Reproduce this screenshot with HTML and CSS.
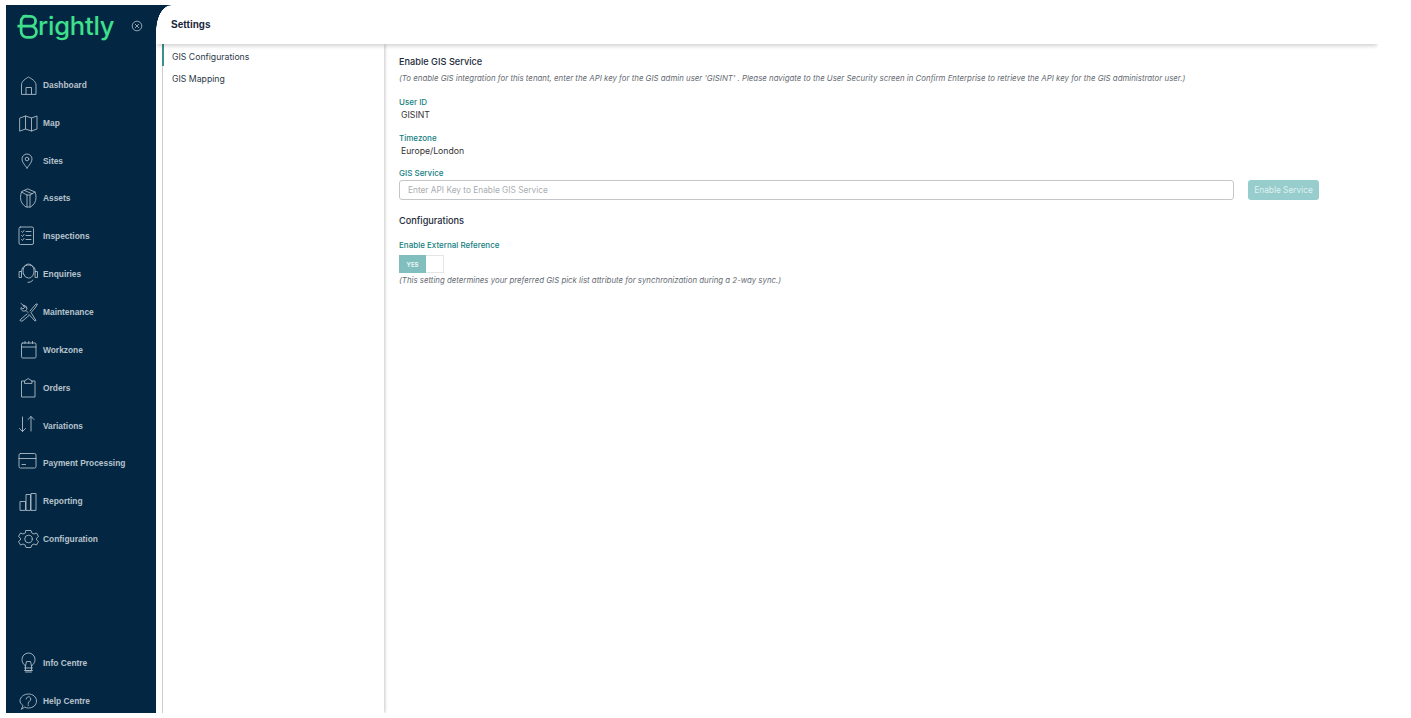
FILE: index.html
```html
<!DOCTYPE html>
<html lang="en">
<head>
<meta charset="utf-8">
<title>Settings</title>
<link rel="stylesheet" href="styles.css">
</head>
<body>
<div class="app">
  <aside class="sidebar">
    <div class="brand">
      <svg class="brand-mark" viewBox="0 0 24 30" width="22" height="28"><path d="M6 4.5 H15 a5 5 0 0 1 0 10.5 H6 M15 15 a6.2 6.2 0 0 1 0 12.5 H11 a6.5 6.5 0 0 1 -6.5 -6.5 V10 a6 6 0 0 1 6 -6 M0.5 15 H15"/></svg>
      <span class="brand-name">rightly</span>
      <svg class="brand-close" viewBox="0 0 12 12" width="12" height="12"><circle cx="6" cy="6" r="4.8"/><path d="M4 4 L8 8 M8 4 L4 8"/></svg>
    </div>
    <ul class="nav">
      <li class="nav-item"><svg class="ico" viewBox="0 0 24 24"><path d="M3.5 21 V12 C3.5 8 8 5.5 10.5 4 C13 5.5 18 8 18 12 V21 Z M8 21 V14.5 H13.5 V21"/></svg><span>Dashboard</span></li>
      <li class="nav-item"><svg class="ico" viewBox="0 0 24 24"><path d="M2 7 L7.5 5 L13.5 7 L19 5 V18 L13.5 20 L7.5 18 L2 20 Z M7.5 5 V18 M13.5 7 V20"/></svg><span>Map</span></li>
      <li class="nav-item"><svg class="ico" viewBox="0 0 24 24"><path d="M9 19 C6 15 4 13 4 10 a5 5 0 0 1 10 0 c0 3 -2 5 -5 9 Z"/><circle cx="9" cy="10" r="1.8"/></svg><span>Sites</span></li>
      <li class="nav-item"><svg class="ico" viewBox="0 0 24 24"><path d="M10 3 L17 6 Q18 8.5 18 11.5 Q18 17.5 12.5 21 H8 Q2.5 17.5 2.5 11.5 Q2.5 8.5 3.5 6 Z M3.5 6 L9 9 V21 M17 6 L12 9 V21 M6.5 4.5 L14 7.7 M9 9 H12"/></svg><span>Assets</span></li>
      <li class="nav-item"><svg class="ico" viewBox="0 0 24 24"><rect x="1" y="3" width="14.5" height="17.5" rx="1.5"/><path d="M3.5 7.5 L4.5 8.5 L6 6.5 M3.5 11.5 L4.5 12.5 L6 10.5 M3.5 15.5 L4.5 16.5 L6 14.5 M8 7.5 H13 M8 11.5 H13 M8 15.5 H13"/></svg><span>Inspections</span></li>
      <li class="nav-item"><svg class="ico" viewBox="0 0 24 24"><path d="M5.5 12 a5.5 7 0 1 1 10 0 a5.5 7 0 0 1 -10 0 Z M1.5 9.5 H3.5 V15.5 H1.5 Z M17.5 9.5 H19.5 V15.5 H17.5 Z M3.5 10 C3.5 5 7 3 10.5 3 C14 3 17.5 5 17.5 10 M15 18 Q13.5 20.5 10 20.5"/></svg><span>Enquiries</span></li>
      <li class="nav-item"><svg class="ico" viewBox="0 0 24 24"><path d="M9 8 L3 3.5 M12 11 L18 4 L19.5 4 L17.8 7 L13.5 12 M9 14 L3 19 Q1.5 20.5 2.5 21 Q4 21.5 5 20.5 L11 15.5 M13 12.5 L18 20.5 L17 21 L11 14.5 M8.5 10 C9.5 7.5 8 5 5 5.5 L6.5 7.5 L5 9 L3 7.5 C2.5 10.5 5.5 12 8 10.5 L10 12.5"/></svg><span>Maintenance</span></li>
      <li class="nav-item"><svg class="ico" viewBox="0 0 24 24"><rect x="3.5" y="5" width="14.5" height="15" rx="1.2"/><path d="M3.5 9 H18 M7 3.5 V5.5 M10.8 3.5 V5.5 M14.5 3.5 V5.5"/></svg><span>Workzone</span></li>
      <li class="nav-item"><svg class="ico" viewBox="0 0 24 24"><path d="M6.5 5 H3.5 V21 H17 V5 H14 M6.5 7 V5 L10.2 2.5 L14 5 V7 Z"/></svg><span>Orders</span></li>
      <li class="nav-item"><svg class="ico" viewBox="0 0 24 24"><path d="M4.5 3 V17.5 M1.5 14.5 L4.5 17.5 L7.5 14.5 M13 17 V2.5 M10 5.5 L13 2.5 L16 5.5"/></svg><span>Variations</span></li>
      <li class="nav-item"><svg class="ico" viewBox="0 0 24 24"><rect x="1" y="2.5" width="17" height="14.5" rx="1.5"/><path d="M1 7.5 H18 M4 13.5 H7.5"/></svg><span>Payment Processing</span></li>
      <li class="nav-item"><svg class="ico" viewBox="0 0 24 24"><path d="M2 21 V12.5 H7.5 V21 Z M8 21 V5.5 H12.5 V21 Z M13 21 V4.5 H18 V21 Z"/></svg><span>Reporting</span></li>
      <li class="nav-item"><svg class="ico" viewBox="0 0 24 24"><circle cx="10.5" cy="12" r="3.8"/><path d="M8 3.5 H13 L13.8 6 L16 7 L18.5 6 L20.5 9.5 L18.5 11.2 V12.8 L20.5 14.5 L18.5 18 L16 17 L13.8 18 L13 20.5 H8 L7.2 18 L5 17 L2.5 18 L0.5 14.5 L2.5 12.8 V11.2 L0.5 9.5 L2.5 6 L5 7 L7.2 6 Z"/></svg><span>Configuration</span></li>
    </ul>
    <ul class="nav nav-bottom">
      <li class="nav-item"><svg class="ico" viewBox="0 0 24 24"><path d="M7.5 15 C5 13 4 11 4 8.5 a6.5 6.5 0 0 1 13 0 C17 11 16 13 13.5 15 M7.5 15 V19.5 H13.5 V15 M7.5 15 L8.5 10.5 H12.5 L13.5 15 M6.5 17 H14.5 M6.5 19.5 H14.5 M7.5 21 H13.5"/></svg><span>Info Centre</span></li>
      <li class="nav-item"><svg class="ico" viewBox="0 0 24 24"><path d="M3.5 20 L5 16.5 C3 15 2 13.5 2 12 C2 8 6 5 10.5 5 C15 5 18.5 8 18.5 12 C18.5 16 15 19 10.5 19 Q8.5 19 7 18.3 Z M8.2 10 a2.3 2.3 0 1 1 3.5 2 Q10.2 13 10.2 14.5 M10.2 15.8 V16.6"/></svg><span>Help Centre</span></li>
    </ul>
  </aside>
  <div class="content">
    <header class="topbar"><h1 class="page-title">Settings</h1></header>
    <div class="panes">
      <nav class="subnav">
        <a class="subnav-item is-active">GIS Configurations</a>
        <a class="subnav-item">GIS Mapping</a>
      </nav>
      <main class="main">
        <h2 class="section-title">Enable GIS Service</h2>
        <p class="hint">(To enable GIS integration for this tenant, enter the API key for the GIS admin user 'GISINT' . Please navigate to the User Security screen in Confirm Enterprise to retrieve the API key for the GIS administrator user.)</p>
        <div class="field field-first">
          <div class="label">User ID</div>
          <div class="value">GISINT</div>
        </div>
        <div class="field">
          <div class="label">Timezone</div>
          <div class="value">Europe/London</div>
        </div>
        <div class="field field-service">
          <div class="label">GIS Service</div>
          <div class="service-row">
            <div class="input">Enter API Key to Enable GIS Service</div>
            <button class="btn" type="button">Enable Service</button>
          </div>
        </div>
        <h2 class="section-title section-config">Configurations</h2>
        <div class="label label-toggle">Enable External Reference</div>
        <div class="toggle"><span class="toggle-on">YES</span><span class="toggle-off"></span></div>
        <p class="hint hint-toggle">(This setting determines your preferred GIS pick list attribute for synchronization during a 2-way sync.)</p>
      </main>
    </div>
  </div>
</div>
</body>
</html>
```
FILE: styles.css
```css
* { box-sizing: border-box; }
html, body { margin: 0; padding: 0; height: 100%; background: #fff; overflow: hidden; }
body { font-family: "Inter", "Liberation Sans", sans-serif; }
.app { display: flex; height: 708px; margin: 5px 33px 0 6px; }

.sidebar { width: 150px; flex: none; background: #032743; display: flex; flex-direction: column; overflow: hidden; }
.brand { height: 61px; flex: none; display: flex; align-items: center; padding: 0 0 20px 11px; }
.brand-mark { flex: none; fill: none; stroke: #3ee08b; stroke-width: 3; }
.brand-name { font-family: "Inter", sans-serif; font-size: 25.5px; font-weight: 500; color: #3ee08b; margin-left: -1px; line-height: 1; letter-spacing: -0.2px; }
.brand-close { flex: none; margin-left: 17px; fill: none; stroke: #b6c2cc; stroke-width: 0.8; }

.nav { list-style: none; margin: 0; padding: 0; flex: none; }
.nav-bottom { margin-top: 86px; }
.nav-item { height: 37.85px; display: flex; align-items: center; padding-left: 12px; color: #b7c2cb; font-family: "Liberation Sans", sans-serif; font-size: 8.4px; font-weight: 700; }
.ico { width: 24px; height: 24px; flex: none; margin-right: 1px; fill: none; stroke: #aebbc6; stroke-width: 0.9; stroke-linejoin: round; stroke-linecap: round; }

.content { flex: 1; min-width: 0; display: flex; flex-direction: column; }
.topbar { position: relative; height: 39px; flex: none; display: flex; align-items: center; padding-left: 15px; background: #fff; box-shadow: 0 3px 4px -1px rgba(0,0,0,.18); clip-path: inset(0 0 -8px 0); z-index: 2; }
.topbar::before { content: ""; position: absolute; left: 0; top: 0; width: 15px; height: 26px; background: radial-gradient(ellipse 15px 26px at 100% 100%, #fff 97%, #032743 100%); }
.page-title { margin: 0; font-family: "Liberation Sans", sans-serif; font-size: 10px; font-weight: 700; color: #16233a; }

.panes { flex: 1; display: flex; min-height: 0; padding-left: 6px; }
.subnav { width: 222px; flex: none; border-left: 1px solid #c9cdd0; box-shadow: 1px 0 3px rgba(0,0,0,.22); clip-path: inset(0 -6px 0 0); display: flex; flex-direction: column; z-index: 1; }
.subnav-item { height: 22px; display: flex; align-items: center; padding: 4px 0 0 8px; font-size: 8.7px; color: #2c3a46; margin-left: -1px; border-left: 2px solid transparent; }
.subnav-item.is-active { border-left-color: #3a8f8f; }

.main { flex: 1; min-width: 0; padding: 11px 59px 0 15px; color: #2c3a46; }
.section-title { margin: 0; font-size: 9.2px; line-height: 13px; font-weight: 500; color: #1c2b3a; }
.hint { margin: 4px 0 0; font-size: 7.85px; line-height: 12px; font-style: italic; color: #666c73; white-space: nowrap; }
.label { font-size: 8px; line-height: 11px; font-weight: 500; color: #15807f; }
.value { font-size: 8.7px; line-height: 13px; padding: 1px 0 0 2px; color: #333; }
.field-first { margin-top: 13px; }
.field + .field { margin-top: 11px; }
.field + .field-service { margin-top: 10px; }
.service-row { display: flex; gap: 14px; margin-top: 1px; }
.input { flex: 1; height: 20px; border: 1px solid #c4c7ca; border-radius: 3px; padding-left: 8px; display: flex; align-items: center; font-size: 8.3px; color: #a9adb1; }
.btn { width: 71px; height: 20px; padding: 0; border: 0; border-radius: 3px; background: #97cdcd; color: #dff0f0; font-family: inherit; font-size: 8.3px; }
.section-config { margin-top: 14px; }
.label-toggle { margin-top: 13px; }
.toggle { display: flex; width: 45px; height: 18px; margin-top: 4px; border: 1px solid #e3e5e6; }
.toggle-on { width: 27px; margin: -1px 0 -1px -1px; background: #81bfbf; color: #e7f4f4; font-size: 6px; font-weight: 700; display: flex; align-items: center; justify-content: center; }
.toggle-off { flex: 1; }
.hint-toggle { margin-top: 1px; }
```
